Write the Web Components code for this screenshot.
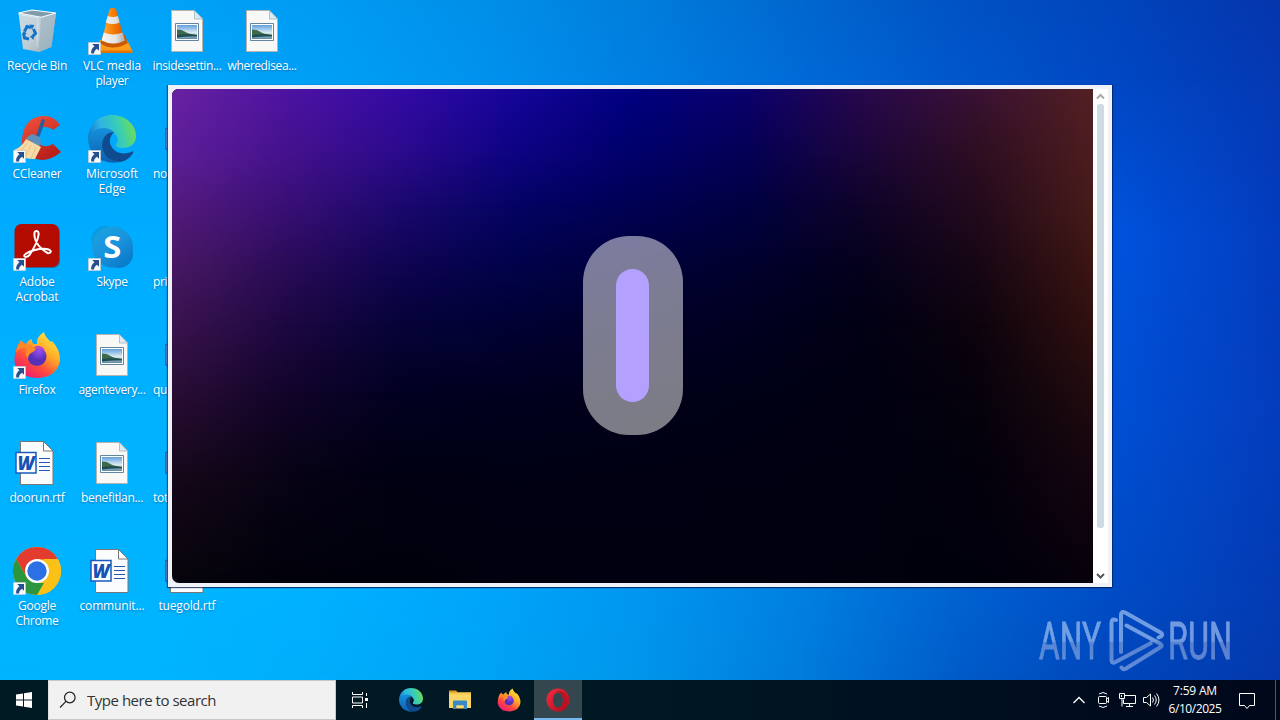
<!DOCTYPE html>
<html lang="en">
<head>
<meta charset="utf-8">
<title>Desktop</title>
<style>
  html, body { margin: 0; height: 100%; overflow: hidden; }
  body { font-family: "Open Sans", "Noto Sans", sans-serif; }
</style>
</head>
<body>
<win-desktop></win-desktop>

<script>
const ARROW = `<g transform="translate(0 35)"><rect x=".2" y=".2" width="12.6" height="12.6" fill="#f8fafc" stroke="#9aa9b5" stroke-width=".4"/><path d="M4.2 2h6.8v6.8L8.9 6.7C6.7 8.5 6 9.6 6.1 11.4H3.2C2.8 8.4 4 6.2 6.4 4.2z" fill="#26508e"/></g>`;

// all 48x48
const ICONS = {
  bin: `<defs><linearGradient id="g" x2="1" y2="1"><stop stop-color="#c9dfe9"/><stop offset=".55" stop-color="#c0cbd2"/><stop offset="1" stop-color="#8fa4b0"/></linearGradient></defs>
    <path d="M5.5 6 19 3l24 3-4.5 34L26 45 10 42z" fill="url(#g)"/>
    <path d="m28 10 15-4-4.5 34L26 45z" fill="#9db5c2" opacity=".7"/>
    <path d="M5.5 6 19 3l24 3-15 4.2z" fill="#7f9cab" stroke="#f4fafd" stroke-width="1.1"/>
    <path d="m9 8 16 3-1 29" fill="none" stroke="#e8f1f5" stroke-width=".8" opacity=".7"/>
    <g fill="none" stroke="#1273c8" stroke-width="3"><path d="m11.500 24.500 2.500-5 4 1"/><path d="m20.500 22 2 4.500-2.500 2.500"/><path d="m16 32-4.500-1-.8-4"/></g>
    <path d="m16.500 17.500 5 .5-2.500 4.500zM21.500 27l-4.500 2.500 3.500 3.500zM8.500 27.500l2.500-3.500 3 3z" fill="#1273c8"/>`,
  vlc: `<defs><linearGradient id="o"><stop stop-color="#ffad3a"/><stop offset=".5" stop-color="#f77d05"/><stop offset="1" stop-color="#d95500"/></linearGradient><linearGradient id="w"><stop stop-color="#f4f4f4"/><stop offset=".6" stop-color="#e4e4e4"/><stop offset="1" stop-color="#aaa"/></linearGradient></defs>
    <path d="m12 33-4 11q0 2 2 2h33q2 0 1.500-2L39 33z" fill="#ff9d1a"/><path d="M8 43.500h36.500q.5 2.500-1.500 2.500H9.500Q8 46 8 43.500" fill="#e57300"/>
    <path d="M12 36q12 9 28 0l-3-8H15z" fill="#c95a05"/>
    <path d="M21.500 2Q24.500 0 28 2L36.500 33Q25 40 14 33z" fill="url(#o)"/>
    <path d="m19.700 9-1.900 6.500q7 3 13.900 0L29.900 9q-5 2-10.200 0zM15.800 25.500l-2.300 8q12 6 23.500 0l-2.500-8q-9.500 4-18.700 0z" fill="url(#w)"/>`,
  image: `<defs><linearGradient id="s" x2="0" y2="1"><stop stop-color="#5f9fdd"/><stop offset=".55" stop-color="#dcebf3"/><stop offset="1" stop-color="#5b89a4"/></linearGradient></defs>
    <path d="M8.500 3.500h23L39.500 12v32.500h-31z" fill="#f8f8f6" stroke="#b7b3ad"/>
    <path d="M31.500 3.500V12h8z" fill="#dcecf5" stroke="#9fb4c0" stroke-width=".8"/>
    <path d="M12.500 16.500h23v17h-23z" fill="#fff" stroke="#66839c"/><path d="M14 18h20v14H14z" fill="url(#s)"/>
    <path d="M14 22.500q5 0 8 2.300t12 3V29H14z" fill="#3c6a4a"/><path d="M14 28q10-1.500 20 .3v1.200q-10-.5-20 1z" fill="#1f4c50"/>`,
  word: `<path d="M7.500 2.500h23L40 12v33.500H7.500z" fill="#fbfcfd" stroke="#777"/><path d="M30.500 2.500V12H40z" fill="#fff" stroke="#777"/>
    <path d="M26 19.500h11M26 23.500h11M26 27.500h11M26 31.500h11" stroke="#2659ad" stroke-width="1"/>
    <path d="M3 13.500h20v20.500H3z" fill="#fff" stroke="#185abd" stroke-width="1.500"/>
    <text x="13" y="30.500" text-anchor="middle" textLength="17" lengthAdjust="spacingAndGlyphs" font-family="Open Sans, sans-serif" font-size="19" font-weight="800" font-style="italic" fill="#1653b4">W</text>`,
  ccleaner: `<defs><linearGradient id="r" x2=".5" y2="1"><stop stop-color="#f4553c"/><stop offset="1" stop-color="#b91f1b"/></linearGradient></defs>
    <path d="M47 10Q41 .5 30 1 14 2 10 18q-4 16 8 24 14 8 30-5l-8-8q-7 4-12 1-6-4-4-11 2-7 8-7 5 0 8 3z" fill="url(#r)"/>
    <path d="m30 6-6 18" stroke="#285e99" stroke-width="3.600" stroke-linecap="round"/><path d="m13 23 6-4 8 3 1 7-3 3z" fill="#5d91bc"/>
    <path d="m13 24 15 8q-3 6-6 12-12 1-21-9Q9 32 13 24z" fill="#f8daa5"/><path d="m14 28-6 8m10-6-6 12m11-10-5 12" stroke="#e3b97a" stroke-width=".8"/>`,
  edge: `<defs><linearGradient id="a" x1="0" y1=".6" x2="1" y2=".4"><stop stop-color="#1579cb"/><stop offset=".3" stop-color="#2eb3e4"/><stop offset=".65" stop-color="#38cdb6"/><stop offset="1" stop-color="#71de51"/></linearGradient><linearGradient id="b" x2="0" y2="1"><stop stop-color="#1591dc"/><stop offset="1" stop-color="#0d5fb0"/></linearGradient></defs>
    <path d="M0 23C1 9 11 0 24 0c14 0 24 10 24 21 0 8-6 12-13 12-6 0-8-2-7-4 3-3 2-7-1-10-6-7-20-7-27 4z" fill="url(#a)"/>
    <path d="M0 23C4 14 17 9 26 17c-8 0-13 7-12 15 2 10 11 16 18 15C14 51 0 38 0 23z" fill="url(#b)"/>
    <path d="M18 20c-8 7-4 27 14 27 6-1 10-4 13-9 1-2-1-2-2-1-13 5-22-4-21-12 0-3 2-6 4-8-3 0-6 1-8 3z" fill="#104b8f"/>`,
  acrobat: `<rect x="2" y="2" width="45" height="43" rx="7" fill="#7d1517" opacity=".5"/><rect x="1.500" y="1" width="44.500" height="43" rx="7" fill="#b30b00"/>
    <path d="M21.500 10c0-3 5-3 4 2-1 8-5 14-9 20-4 4-7 1-4-1 4-3 14-6 21-5 7 1 4 5 1 4-6-3-14-11-13-20z" fill="none" stroke="#fff" stroke-width="2"/>`,
  skype: `<defs><linearGradient id="k" x2=".7" y2="1"><stop stop-color="#1aa5e0"/><stop offset=".55" stop-color="#1a93dd"/><stop offset="1" stop-color="#0a7bcb"/></linearGradient></defs>
    <circle cx="17" cy="16.500" r="13.500" fill="#0a9be0"/><circle cx="31" cy="31" r="14" fill="#087fce"/><circle cx="24.500" cy="24" r="20.500" fill="url(#k)"/>
    <text x="24.200" y="34.500" text-anchor="middle" textLength="18" lengthAdjust="spacingAndGlyphs" font-family="Open Sans, sans-serif" font-weight="700" font-size="30" fill="#fff">S</text>`,
  firefox: `<defs><linearGradient id="f" x1=".9" x2=".2" y2="1"><stop stop-color="#fff04a"/><stop offset=".4" stop-color="#ffab27"/><stop offset=".68" stop-color="#ff4b3c"/><stop offset="1" stop-color="#e7157d"/></linearGradient><radialGradient id="p" cx=".6" cy=".2"><stop stop-color="#9d4df5"/><stop offset="1" stop-color="#5730b8"/></radialGradient></defs>
    <path d="M8 9q2 3 5 4 2-4 6-5-1 3 2 5h3q-1-7 7-12 1 5 7 10 1-1 1-1 8 8 8 19-2 16-21 18Q5 47 1.500 31 1 18 8 9z" fill="url(#f)"/>
    <circle cx="24" cy="25.500" r="9.500" fill="url(#p)"/><path d="M3 22Q5 10 9 12q6 3 9 1 0 4 5 4-1 4-5 5-3 2-3 6-4-5 0-11-7-2-12 5z" fill="#ff8924"/><path d="M22 15q7-1 10 4-5-2-8-1z" fill="#c64aba"/>`,
  chrome: `<circle cx="24" cy="24" r="24" fill="#fbc116"/><path d="M3.200 12A24 24 0 0 1 44.800 12L24 12.500 13.600 30z" fill="#e33b2e"/><path d="M3.200 12 13.600 30 24 36h10L24 48A24 24 0 0 1 3.200 12z" fill="#2c963f"/><path d="M44.800 12A24 24 0 0 1 24 48l10.400-18L31 12z" fill="#fbc116"/><circle cx="24" cy="24" r="12" fill="#fff"/><circle cx="24" cy="24" r="9.700" fill="#2b70e4"/>`,
  folder: `<path d="M2 5h14l4 4H2z" fill="#e29a1a"/><path d="M2 9h44v31H2z" fill="#fbd667"/><path d="M2 9h44v4H2z" fill="#f9c94c"/><path d="M10 42V27q0-2 2-2h24q2 0 2 2v15h-7v-7H17v7z" fill="#368bc5"/><path d="M17 35h14v6H17z" fill="#f9d873"/>`,
  opera: `<defs><linearGradient id="q" x2="1" y2="1"><stop stop-color="#ff2a40"/><stop offset="1" stop-color="#a10e1c"/></linearGradient></defs><path fill-rule="evenodd" d="M24 1a23 23 0 1 0 0 46 23 23 0 0 0 0-46m0 8c6 0 10 7 10 15s-4 15-10 15-10-7-10-15S18 9 24 9" fill="url(#q)"/><path d="M17 10q10-9 20 0 9 13 0 27-10 10-20 1c9 6 17-2 17-14S25 4 17 10z" fill="#b81425"/>`
};

class AppIcon extends HTMLElement {
  constructor() {
    super();
    this.attachShadow({ mode: 'open' });
  }

  connectedCallback() {
    this.shadowRoot.innerHTML = `
      <style>
        :host { display: block; width: 48px; height: 48px; }
        svg { display: block; width: 100%; height: 100%; overflow: visible; }
        text { text-shadow: none; }
      </style>
      <svg viewBox="0 0 48 48">${ICONS[this.getAttribute('name')]}${this.hasAttribute('shortcut') ? ARROW : ''}</svg>
    `;
  }
}
customElements.define('app-icon', AppIcon);

// One line of text, tracked to a given width
class FitText extends HTMLElement {
  constructor() {
    super();
    this.attachShadow({ mode: 'open' });
    this.shadowRoot.innerHTML = `
      <style>
        :host { display: block; white-space: nowrap; }
        span { display: inline-block; }
      </style>
      <span><slot></slot></span>
    `;
  }

  connectedCallback() {
    const span = this.shadowRoot.querySelector('span');
    const want = parseFloat(this.getAttribute('width'));
    const gap = (want - span.getBoundingClientRect().width) / this.textContent.length;
    span.style.letterSpacing = gap.toFixed(3) + 'px';
  }
}
customElements.define('fit-text', FitText);

// Two-way gradient: every row of colours fades down into the next one
class MeshGradient extends HTMLElement {
  constructor() {
    super();
    this.attachShadow({ mode: 'open' });
    this.shadowRoot.innerHTML = `
      <style>
        :host { display: grid; width: 100%; height: 100%; }
        div { grid-area: 1 / 1; }
      </style>
    `;
  }

  set mesh({ xs, rows }) {
    for (let i = rows.length - 1; i >= 0; i--) {
      const layer = document.createElement('div');
      const stops = rows[i][1].split(' ').map((c, n) => `#${c} ${xs[n]}px`);
      layer.style.background = `linear-gradient(to right, ${stops.join(', ')})`;
      if (i < rows.length - 1) {
        layer.style.maskImage = `linear-gradient(#000 ${rows[i][0]}px, transparent ${rows[i + 1][0]}px)`;
      }
      this.shadowRoot.append(layer);
    }
  }
}
customElements.define('mesh-gradient', MeshGradient);

class DesktopItem extends HTMLElement {
  constructor() {
    super();
    this.attachShadow({ mode: 'open' });
    this.shadowRoot.innerHTML = `
      <style>
        :host {
          display: flex;
          flex-direction: column;
          align-items: center;
          gap: 3px;
          color: #fff;
          font-size: 12px;
          line-height: 15px;
          text-shadow: 0 1px 2px rgba(0,60,120,.5);
        }
        :host([cut]) .label { align-self: flex-start; padding-left: 3px; }
        .label { display: flex; flex-direction: column; align-items: center; }
      </style>
      <slot name="icon"></slot>
      <div class="label"><slot></slot></div>
    `;
  }
}
customElements.define('desktop-item', DesktopItem);

class AppWindow extends HTMLElement {
  constructor() {
    super();
    this.attachShadow({ mode: 'open' });
    this.shadowRoot.innerHTML = `
      <style>
        :host {
          display: flex;
          box-sizing: border-box;
          width: 945px;
          height: 502px;
          padding: 4px;
          border-left: 1px solid #15548b;
          background: #eff3f9;
          box-shadow: 0 1px 1px rgba(0,20,70,.7), 1px 0 1px rgba(0,20,70,.5);
        }
        .page {
          display: grid;
          width: 921px;
          height: 494px;
          border-radius: 7px 0 0 7px;
          overflow: hidden;
        }
        mesh-gradient, .logo { grid-area: 1 / 1; }
        .logo {
          z-index: 1;
          place-self: center;
          box-sizing: border-box;
          width: 100px;
          height: 199px;
          margin-bottom: 1px;
          padding: 33px;
          border-radius: 46px;
          background: rgba(255,255,255,.485);
        }
        .bar { width: 33px; height: 133px; border-radius: 17px; background: #b3a0ff; }
        .scroll {
          display: flex;
          flex-direction: column;
          align-items: center;
          width: 15px;
          background: #fff;
        }
        .scroll svg { width: 15px; height: 15px; fill: none; stroke-width: 2; }
        .thumb { width: 7px; height: 424px; margin-bottom: auto; border-radius: 3px; background: #cfdbe2; }
      </style>
      <div class="page">
        <mesh-gradient></mesh-gradient>
        <div class="logo"><div class="bar"></div></div>
      </div>
      <div class="scroll">
        <svg viewBox="0 0 15 15"><path d="m4 9.500 3.500-3.500 3.500 3.500" stroke="#a9a9ad"/></svg>
        <div class="thumb"></div>
        <svg viewBox="0 0 15 15"><path d="m4 6 3.500 3.500L11 6" stroke="#55555a"/></svg>
      </div>
    `;
    this.shadowRoot.querySelector('mesh-gradient').mesh = {
      xs: [0, 115, 230, 345, 460, 575, 690, 805, 921],
      rows: [
        [0, '6822a0 4d13a2 330aa5 15059a 000080 0b006c 28084c 3a1234 522022'],
        [60, '5e1f9a 45128e 2c0a8e 0d0384 00006c 050056 1c063c 2e0e22 4d1d1f'],
        [120, '531b7c 380f74 1a086c 030362 000052 000040 0e0328 220a1c 461b19'],
        [180, '471862 290b56 0e0450 000248 00003a 00002c 04011c 160614 3b1512'],
        [240, '39134c 1c0740 050336 000032 000028 000020 010014 0c030d 301010'],
        [310, '280d33 110428 010120 00001e 00001a 000016 000012 06020c 200b0f'],
        [390, '160819 070314 000012 000014 000013 000012 000010 02000c 14050f'],
        [494, '07050b 01010b 00000c 00000f 000010 00000f 00000e 00000d 07020b']
      ]
    };
  }
}
customElements.define('app-window', AppWindow);

class WaterMark extends HTMLElement {
  constructor() {
    super();
    this.attachShadow({ mode: 'open' });
    this.shadowRoot.innerHTML = `
      <style>
        :host { display: block; width: 240px; height: 70px; opacity: .6; }
        svg { display: block; overflow: visible; }
        text { font: 400 51px Roboto, sans-serif; fill: url(#m); stroke: url(#m); stroke-width: .8px; }
      </style>
      <svg width="240" height="70" viewBox="0 0 240 70">
        <defs><linearGradient id="m" gradientUnits="userSpaceOnUse" x1="0" y1="0" x2="0" y2="64"><stop stop-color="#b9d6f8"/><stop offset=".5" stop-color="#bcd6fa"/><stop offset=".53" stop-color="#91abdf"/><stop offset="1" stop-color="#a5bdee"/></linearGradient></defs>
        <text x="1" y="50" textLength="62" lengthAdjust="spacingAndGlyphs">ANY</text>
        <text x="130" y="50" textLength="64" lengthAdjust="spacingAndGlyphs">RUN</text>
        <path d="M78 11Q73.500 9 73.500 14v37q0 4 4 2L112.700 34.300M83 43V6q0-4.500 4-2.500l35.500 20q3 2 .5 4l-2.500 1M88.500 16.500 122.700 35q2 1.500 0 3L88 59.500q-3 1.500-4.500-1" fill="none" stroke="url(#m)" stroke-width="4" stroke-linejoin="round" stroke-linecap="round"/>
      </svg>
    `;
  }
}
customElements.define('water-mark', WaterMark);

class TaskBar extends HTMLElement {
  constructor() {
    super();
    this.attachShadow({ mode: 'open' });
    this.shadowRoot.innerHTML = `
      <style>
        :host {
          display: flex;
          height: 40px;
          color: #fff;
          background: linear-gradient(to right, #001a24, #001823 50%, #000e20 80%, #00081a);
        }
        .cell { display: grid; place-items: center; width: 48px; height: 40px; }
        .cell svg, .tray svg { display: block; fill: none; stroke: #fff; }
        .search {
          display: flex;
          align-items: center;
          gap: 10px;
          box-sizing: border-box;
          width: 288px;
          padding-left: 10px;
          background: #f1f1f1;
          border: 1px solid #c5c9cb;
          border-left-color: #e0e0e0;
          color: #333;
          font-size: 15px;
        }
        .search svg { fill: none; stroke: #222; stroke-width: 1.2; }
        app-icon { width: 24px; height: 24px; }
        .apps { display: flex; gap: 1px; }
        .apps .cell:first-child { margin-right: 2px; }
        .active {
          box-sizing: border-box;
          padding-top: 2px;
          background: #34474f;
          border-bottom: 2px solid #76b9ed;
        }
        .tray { display: flex; align-items: center; margin-left: auto; }
        .tray svg { width: 24px; }
        .clock {
          display: flex;
          flex-direction: column;
          align-items: center;
          width: 60px;
          margin: 0 13px 1px 2px;
          font-size: 12px;
          line-height: 18px;
        }
        .bubble { align-self: center; fill: none; stroke: #fff; }
        .peek { width: 4px; height: 40px; margin-left: 19px; border-left: 1px solid #4f5968; }
      </style>
      <div class="cell"><svg width="16" height="16"><path d="M0 2.500 7 1.400V7.500H0zM8 1.200 16 0v7.500H8zM0 8.500h7v6L0 13.600zM8 8.500h8V16l-8-1.300z" fill="#fff" stroke="none"/></svg></div>
      <div class="search">
        <svg width="18" height="18"><circle cx="10.800" cy="6.500" r="5.300"/><path d="M7 10.300 1 16.500"/></svg>
        <fit-text width="129">Type here to search</fit-text>
      </div>
      <div class="apps">
        <div class="cell"><svg width="18" height="16"><path d="M1.500 0v2.500h10V0M1.500 16v-2.500h10V16M1.500 5h10v6h-10zM15.500 1v3m0 7v5"/><path d="M14 6h3v3h-3z" fill="#fff" stroke="none"/></svg></div>
        <div class="cell"><app-icon name="edge"></app-icon></div>
        <div class="cell"><app-icon name="folder"></app-icon></div>
        <div class="cell"><app-icon name="firefox"></app-icon></div>
        <div class="cell active"><app-icon name="opera"></app-icon></div>
      </div>
      <div class="tray">
        <svg viewBox="0 0 24 14" height="14"><path d="m6.500 10 5.500-5.500 5.500 5.500" stroke-width="1.300"/></svg>
        <svg viewBox="-5 0 24 18" height="18"><path d="M3 3q4-3 8 0M3 15q4 3 8 0M3.500 5.500h6q1 0 1 1v5q0 1-1 1h-6q-1 0-1-1v-5q0-1 1-1zM10.500 8l2-1.500v5l-2-1.500"/></svg>
        <svg viewBox="-4 0 24 16" height="16"><path d="M6 3.500h10.500v8h-12v-4M.5 1.500h5v5h-5zM3 6.500v8M10.500 11.500v3M7 14.500h7M2.500 3v2"/></svg>
        <svg viewBox="-3 0 24 16" height="16"><path d="M1.500 5.500h3l4-3.500v12l-4-3.500h-3zM10.500 5.500q2 2.500 0 5M12.500 3.500q3.500 4.500 0 9M14.500 1.500q5 6.500 0 13"/></svg>
        <div class="clock"><fit-text width="44">7:59 AM</fit-text><fit-text width="53">6/10/2025</fit-text></div>
      </div>
      <svg class="bubble" width="18" height="18"><path d="M1.500 2.500h15v12h-5l-2.500 3-2.500-3h-5z"/></svg>
      <div class="peek"></div>
    `;
  }
}
customElements.define('task-bar', TaskBar);

// icon, shortcut, then [line, width] pairs; column by column
const ITEMS = [
  ['bin', 0, ['Recycle Bin', 60]],
  ['ccleaner', 1, ['CCleaner', 49]],
  ['acrobat', 1, ['Adobe', 35], ['Acrobat', 43]],
  ['firefox', 1, ['Firefox', 37]],
  ['word', 0, ['doorun.rtf', 55]],
  ['chrome', 1, ['Google', 38], ['Chrome', 43]],
  ['vlc', 1, ['VLC media', 58], ['player', 33]],
  ['edge', 1, ['Microsoft', 52], ['Edge', 27]],
  ['skype', 1, ['Skype', 31]],
  ['image', 0, ['agentevery...', 67]],
  ['image', 0, ['benefitlan...', 62]],
  ['word', 0, ['communit...', 65]],
  ['image', 0, ['insidesettin...', 69]],
  ['word', 0, ['no', 14]],
  ['image', 0, ['pri', 14]],
  ['word', 0, ['qu', 14]],
  ['word', 0, ['tot', 15]],
  ['word', 0, ['tuegold.rtf', 57]],
  ['image', 0, ['wheredisea...', 69]]
];

class WinDesktop extends HTMLElement {
  constructor() {
    super();
    this.attachShadow({ mode: 'open' });
    this.shadowRoot.innerHTML = `
      <style>
        :host { display: grid; grid-template-rows: 680px 40px; width: 1280px; height: 720px; }
        .area { display: grid; position: relative; overflow: hidden; }
        .area > * { grid-area: 1 / 1; }
        .ray { width: 1280px; height: 680px; }
        .icons {
          display: grid;
          position: relative;
          grid-auto-flow: column;
          grid-template-rows: repeat(6, 108px);
          grid-auto-columns: 74px;
          column-gap: 1px;
          justify-content: start;
          align-content: start;
          padding-top: 7px;
        }
        app-window { position: absolute; left: 167px; top: 85px; }
        water-mark { position: absolute; left: 1038px; top: 609px; }
      </style>
      <div class="area">
        <mesh-gradient></mesh-gradient>
        <svg class="ray" viewBox="0 0 1280 680"><path d="M190 0 490 86H462L215 10z" fill="#2db6ff" opacity=".18"/><path d="m205 3 280 82" stroke="#4cc3ff" stroke-width="1" opacity=".3"/></svg>
        <div class="icons"></div>
        <app-window></app-window>
        <water-mark></water-mark>
      </div>
      <task-bar></task-bar>
    `;
    this.shadowRoot.querySelector('mesh-gradient').mesh = {
      xs: [0, 160, 320, 480, 640, 800, 960, 1120, 1280],
      rows: [
        [0, '00a4f9 00a2f7 009bf2 008fe8 007ddb 0067ce 0052c3 0044bb 0535ac'],
        [85, '00a8fc 00a7fb 00a0f7 0093ef 0080e3 006bd8 0057cc 0047c3 0539b4'],
        [230, '00acff 00acff 00a8fc 009df6 0087ea 0073e0 0060dd 0052dc 043cbd'],
        [400, '00b1ff 00b1ff 00b0ff 00a6fb 0093f0 0078e2 0064dc 004fd4 043dbd'],
        [587, '00b3ff 00b4ff 00b0ff 00a5fb 0096f0 0080e1 0062d0 004bc5 043bb4'],
        [680, '00b4ff 00b4fe 00aefb 00a4f5 0096eb 007cdc 005bc9 0046bb 0539ad']
      ]
    };
  }

  connectedCallback() {
    this.shadowRoot.querySelector('.icons').innerHTML = ITEMS.map(([icon, link, ...lines]) => `
      <desktop-item ${/^(no|pri|qu|tot)$/.test(lines[0][0]) ? 'cut' : ''}>
        <app-icon slot="icon" name="${icon}" ${link ? 'shortcut' : ''}></app-icon>
        ${lines.map(([text, width]) => `<fit-text width="${width}">${text}</fit-text>`).join('')}
      </desktop-item>
    `).join('');
  }
}
customElements.define('win-desktop', WinDesktop);
</script>
</body>
</html>
